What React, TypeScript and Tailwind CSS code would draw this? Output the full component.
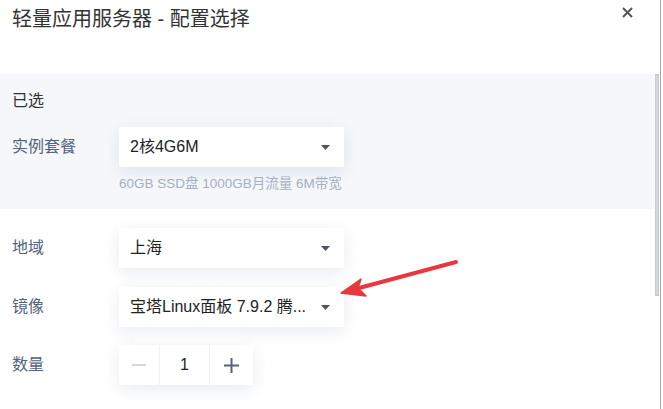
import { ReactNode } from "react";

const font = { fontFamily: '"Liberation Sans", "Noto Sans CJK SC", sans-serif' };

function Caret() {
  return (
    <svg width="9" height="5" viewBox="0 0 9 5" className="shrink-0">
      <path d="M0 0H9L4.5 5Z" fill="#4b5468" />
    </svg>
  );
}

function Select({ value }: { value: string }) {
  return (
    <div className="w-[225px] h-[40px] bg-white flex items-center pl-[11px] pr-[14px] shadow-[0_4px_16px_rgba(30,50,110,0.10)]">
      <span className="flex-1 min-w-0 whitespace-nowrap text-[16px] text-[#222]">{value}</span>
      <Caret />
    </div>
  );
}

function Row({ label, children }: { label: string; children: ReactNode }) {
  return (
    <div className="flex items-center">
      <div className="w-[107px] text-[16px] text-[#56637a]">{label}</div>
      {children}
    </div>
  );
}

function Stepper() {
  return (
    <div className="flex h-[40px] bg-white shadow-[0_4px_16px_rgba(30,50,110,0.10)]">
      <div className="w-[41px] grid place-items-center border-r border-[#f1f2f6]">
        <svg width="14" height="2" viewBox="0 0 14 2">
          <rect width="14" height="2" fill="#d4d7dd" />
        </svg>
      </div>
      <div className="w-[50px] grid place-items-center text-[16px] text-[#222] border-r border-[#f1f2f6]">1</div>
      <div className="w-[43px] grid place-items-center">
        <svg width="15" height="15" viewBox="0 0 15 15">
          <path d="M0 7.5H15M7.5 0V15" stroke="#56637a" strokeWidth="2" />
        </svg>
      </div>
    </div>
  );
}

export default function App() {
  return (
    <div style={font} className="relative w-[663px] h-[409px] bg-white overflow-hidden flex">
      <div className="w-[661px] border-r border-[#a7a7a7] flex flex-col">
        {/* header */}
        <div className="relative h-[74px] shrink-0 pl-[12px] pt-[5px]">
          <div className="text-[20px] leading-[28px] text-[#333]">轻量应用服务器 - 配置选择</div>
          <button type="button" aria-label="关闭" className="absolute left-[622px] top-[7px]">
            <svg width="11" height="11" viewBox="0 0 11 11">
              <path d="M1 1L10 10M10 1L1 10" stroke="#555" strokeWidth="2" />
            </svg>
          </button>
        </div>

        <div className="flex flex-1 min-h-0">
          <div className="flex-1">
            {/* 已选 */}
            <div className="bg-[#f5f7fa] h-[135px] px-[12px] pt-[16px]">
              <div className="text-[16px] leading-[22px] text-[#333]">已选</div>
              <div className="mt-[15px]">
                <Row label="实例套餐">
                  <Select value="2核4G6M" />
                </Row>
              </div>
              <div className="ml-[107px] mt-[8px] text-[13.5px] leading-[18px] text-[#a3b0c2]">
                60GB SSD盘 1000GB月流量 6M带宽
              </div>
            </div>

            <div className="px-[12px] pt-[19px] flex flex-col gap-[19px]">
              <Row label="地域">
                <Select value="上海" />
              </Row>
              <Row label="镜像">
                <Select value="宝塔Linux面板 7.9.2 腾..." />
              </Row>
              <div className="-mt-[1px]">
                <Row label="数量">
                  <Stepper />
                </Row>
              </div>
            </div>
          </div>

          {/* scrollbar */}
          <div className="w-[6px] shrink-0 pl-[1px]">
            <div className="w-[4px] h-[222px] bg-[#d3d7de] border border-[#c6cbd3]" />
          </div>
        </div>
      </div>

      {/* annotation arrow */}
      <svg className="absolute inset-0 pointer-events-none" width="663" height="409" viewBox="0 0 663 409">
        <path d="M456 262L359 288" stroke="#e8383d" strokeWidth="4" strokeLinecap="round" />
        <path d="M341 293L361 279L358 288L366 296Z" fill="#e8383d" stroke="#e8383d" strokeWidth="1.5" strokeLinejoin="round" />
      </svg>
    </div>
  );
}
